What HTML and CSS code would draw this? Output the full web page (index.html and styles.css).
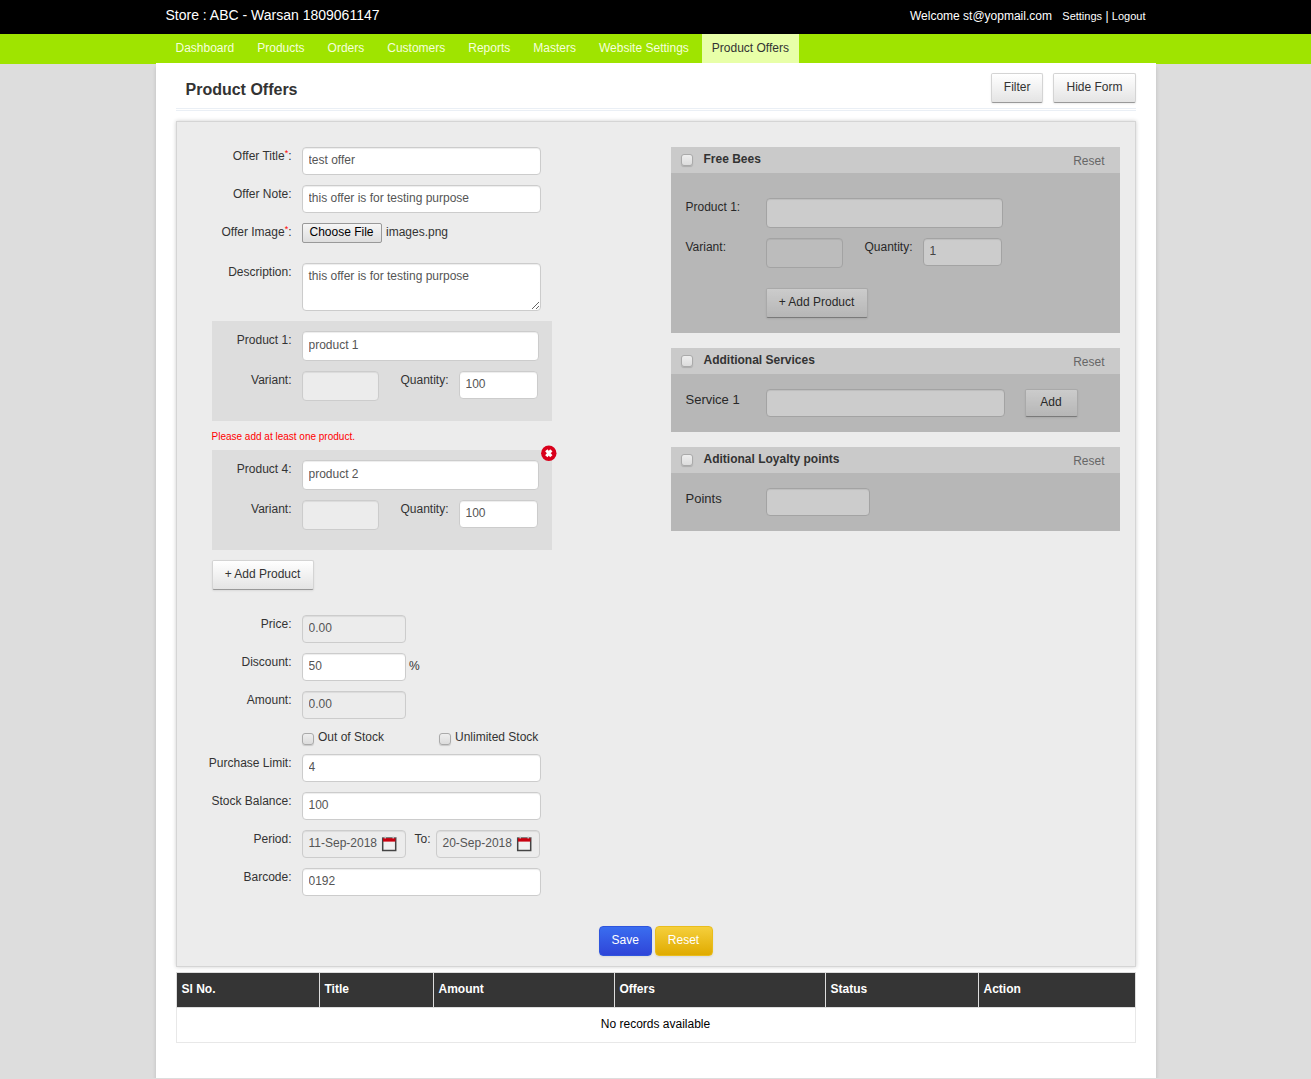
FILE: index.html
```html
<!DOCTYPE html>
<html lang="en">
<head>
  <meta charset="UTF-8" />
  <title>Product Offers</title>
  <link rel="stylesheet" href="styles.css">
</head>
<body>
  <div class="topbar">
    <div class="wrap topbar-inner">
      <div class="store-name">Store : ABC - Warsan 1809061147</div>
      <div class="user-links">
        <span class="welcome">Welcome st@yopmail.com</span>
        <a href="#">Settings</a> | <a href="#">Logout</a>
      </div>
    </div>
  </div>

  <div class="navbar">
    <ul class="wrap nav">
      <li><a href="#">Dashboard</a></li>
      <li><a href="#">Products</a></li>
      <li><a href="#">Orders</a></li>
      <li><a href="#">Customers</a></li>
      <li><a href="#">Reports</a></li>
      <li><a href="#">Masters</a></li>
      <li><a href="#">Website Settings</a></li>
      <li class="active"><a href="#">Product Offers</a></li>
    </ul>
  </div>

  <div class="wrap page">
    <div class="page-head">
      <h1>Product Offers</h1>
      <div class="head-buttons">
        <button type="button" class="btn">Filter</button>
        <button type="button" class="btn">Hide Form</button>
      </div>
    </div>

    <form class="panel">
      <div class="columns">
        <div class="col-left">
          <div class="row">
            <label for="title">Offer Title<sup>*</sup>:</label>
            <input type="text" id="title" class="wide" value="test offer">
          </div>
          <div class="row">
            <label for="note">Offer Note:</label>
            <input type="text" id="note" class="wide" value="this offer is for testing purpose">
          </div>
          <div class="row file-row">
            <label>Offer Image<sup>*</sup>:</label>
            <button type="button" class="file-btn">Choose File</button>
            <span class="file-name">images.png</span>
          </div>
          <div class="row">
            <label for="desc">Description:</label>
            <textarea id="desc" class="wide">this offer is for testing purpose</textarea>
          </div>

          <div class="product-box">
            <div class="row">
              <label for="p1">Product 1:</label>
              <input type="text" id="p1" class="product" value="product 1">
            </div>
            <div class="row">
              <label>Variant:</label>
              <div class="variant"></div>
              <label class="qty-label" for="q1">Quantity:</label>
              <input type="text" id="q1" class="qty" value="100">
            </div>
          </div>
          <p class="error">Please add at least one product.</p>
          <div class="product-box">
            <a href="#" class="remove">
              <svg width="16" height="16" viewBox="0 0 16 16">
                <circle cx="7.8" cy="8.3" r="7.7" fill="#d9001b"/>
                <path d="M5.3 5.3l5 6M10.3 5.3l-5 6" stroke="#fff" stroke-width="3"/>
              </svg>
            </a>
            <div class="row">
              <label for="p4">Product 4:</label>
              <input type="text" id="p4" class="product" value="product 2">
            </div>
            <div class="row">
              <label>Variant:</label>
              <div class="variant"></div>
              <label class="qty-label" for="q4">Quantity:</label>
              <input type="text" id="q4" class="qty" value="100">
            </div>
          </div>
          <button type="button" class="btn add-product">+ Add Product</button>

          <div class="row">
            <label for="price">Price:</label>
            <input type="text" id="price" class="small" value="0.00" readonly>
          </div>
          <div class="row">
            <label for="discount">Discount:</label>
            <input type="text" id="discount" class="small" value="50">
            <span class="percent">%</span>
          </div>
          <div class="row">
            <label for="amount">Amount:</label>
            <input type="text" id="amount" class="small" value="0.00" readonly>
          </div>
          <div class="row checks">
            <label class="check"><input type="checkbox">Out of Stock</label>
            <label class="check"><input type="checkbox">Unlimited Stock</label>
          </div>
          <div class="row">
            <label for="limit">Purchase Limit:</label>
            <input type="text" id="limit" class="wide" value="4">
          </div>
          <div class="row">
            <label for="stock">Stock Balance:</label>
            <input type="text" id="stock" class="wide" value="100">
          </div>
          <div class="row">
            <label>Period:</label>
            <div class="date">11-Sep-2018
              <svg width="16" height="16" viewBox="0 0 16 16">
                <rect x="1.7" y="2.2" width="13" height="12.3" fill="#f0f0f0" stroke="#444" stroke-width="1.5"/>
                <rect x="2" y="2" width="12.4" height="3.6" fill="#c8000f"/>
                <path d="M1 1.7h14.4" stroke="#777" stroke-width=".8"/>
                <path d="M4.2 .6v2M12.2 .6v2" stroke="#ccc" stroke-width="1.4"/>
              </svg>
            </div>
            <span class="to">To:</span>
            <div class="date">20-Sep-2018
              <svg width="16" height="16" viewBox="0 0 16 16">
                <rect x="1.7" y="2.2" width="13" height="12.3" fill="#f0f0f0" stroke="#444" stroke-width="1.5"/>
                <rect x="2" y="2" width="12.4" height="3.6" fill="#c8000f"/>
                <path d="M1 1.7h14.4" stroke="#777" stroke-width=".8"/>
                <path d="M4.2 .6v2M12.2 .6v2" stroke="#ccc" stroke-width="1.4"/>
              </svg>
            </div>
          </div>
          <div class="row">
            <label for="barcode">Barcode:</label>
            <input type="text" id="barcode" class="wide" value="0192">
          </div>
        </div>

        <div class="col-right">
          <div class="extra">
            <div class="extra-head">
              <input type="checkbox"><h2>Free Bees</h2><a href="#">Reset</a>
            </div>
            <div class="extra-body freebees">
              <div class="row">
                <label for="fp">Product 1:</label>
                <input type="text" id="fp" class="product">
              </div>
              <div class="row">
                <label>Variant:</label>
                <div class="variant"></div>
                <label class="qty-label" for="fq">Quantity:</label>
                <input type="text" id="fq" class="qty" value="1">
              </div>
              <button type="button" class="btn">+ Add Product</button>
            </div>
          </div>

          <div class="extra">
            <div class="extra-head">
              <input type="checkbox"><h2>Additional Services</h2><a href="#">Reset</a>
            </div>
            <div class="extra-body large-labels">
              <div class="row">
                <label for="service">Service 1</label>
                <input type="text" id="service" class="wide">
                <button type="button" class="btn btn-add">Add</button>
              </div>
            </div>
          </div>

          <div class="extra">
            <div class="extra-head">
              <input type="checkbox"><h2>Aditional Loyalty points</h2><a href="#">Reset</a>
            </div>
            <div class="extra-body large-labels">
              <div class="row">
                <label for="points">Points</label>
                <input type="text" id="points" class="small">
              </div>
            </div>
          </div>
        </div>
      </div>

      <div class="form-actions">
        <button type="button" class="btn btn-save">Save</button>
        <button type="button" class="btn btn-reset">Reset</button>
      </div>
    </form>

    <table>
      <colgroup>
        <col style="width:143px"><col style="width:114px"><col style="width:181px"><col style="width:211px"><col style="width:153px"><col>
      </colgroup>
      <thead>
        <tr><th>Sl No.</th><th>Title</th><th>Amount</th><th>Offers</th><th>Status</th><th>Action</th></tr>
      </thead>
      <tbody>
        <tr><td colspan="6">No records available</td></tr>
      </tbody>
    </table>
  </div>
</body>
</html>
```
FILE: styles.css
```css
* {
  box-sizing: border-box;
}
body {
  margin: 0;
  background-color: #ddd;
  font-family: "Liberation Sans", Arial, sans-serif;
  font-size: 12px;
  line-height: 18px;
  color: #333;
}
a {
  color: inherit;
  text-decoration: none;
}
.wrap {
  width: 1000px;
  margin: 0 auto;
}

/* header */
.topbar {
  height: 34px;
  background-color: #000;
  color: #fff;
}
.topbar-inner {
  display: flex;
  justify-content: space-between;
  padding: 6px 10px 0;
}
.store-name {
  font-size: 14px;
}
.user-links {
  padding-top: 1px;
}
.user-links a {
  font-size: 11px;
}
.welcome {
  margin-right: 7px;
}
.navbar {
  height: 30px;
  background-color: #9fe400;
}
.nav {
  display: flex;
  gap: 3px;
  padding: 0 10px;
  list-style: none;
}
.nav a {
  display: block;
  height: 29px;
  padding: 5px 10px;
  color: #f5ffdc;
}
.nav .active a {
  background-color: #e8ffa8;
  color: #333;
}

.page {
  height: 1015px;
  margin-top: -1px;
  padding: 10px 20px 0;
  background-color: #fff;
  box-shadow: 0 4px 4px rgba(0, 0, 0, 0.15);
}
.page-head {
  display: flex;
  justify-content: space-between;
  height: 38px;
  padding-left: 10px;
  border-bottom: 3px double #eaeff5;
}
h1 {
  margin: 7px 0 0;
  font-size: 16px;
  line-height: 20px;
}
.head-buttons {
  display: flex;
  gap: 10px;
}

/* buttons */
.btn {
  height: 30px;
  padding: 0 12px 2px;
  border: 1px solid #d4d4d4;
  border-bottom-color: #999;
  border-radius: 2px;
  background: linear-gradient(#fff, #e4e4e4);
  box-shadow: 0 1px 2px rgba(0, 0, 0, 0.08);
  font: 12px/18px "Liberation Sans", Arial, sans-serif;
  color: #333;
}
.btn-save,
.btn-reset {
  width: 53px;
  border: 1px solid #2f55dd;
  border-radius: 4px;
  background: linear-gradient(#3a6df0, #2f45d8);
  color: #fff;
}
.btn-reset {
  width: 58px;
  border-color: #e9bd1c;
  background: linear-gradient(#f5cf3c, #e0ab00);
}

/* form */
.panel {
  height: 846px;
  margin-top: 10px;
  padding-top: 25px;
  border: 1px solid #d5d5d5;
  background-color: #ececec;
  box-shadow: 0 0 4px rgba(0, 0, 0, 0.2);
}
.columns {
  display: flex;
  justify-content: space-between;
  height: 779px;
  padding: 0 15px 0 5px;
}
.col-left {
  width: 370px;
}
.row {
  display: flex;
  align-items: flex-start;
  margin-bottom: 10px;
}
.row label {
  width: 110px;
  margin-right: 10px;
  text-align: right;
  white-space: nowrap;
}
sup {
  position: relative;
  top: 1px;
  font-size: 9px;
  line-height: 0;
  color: #f00;
}
input[type="text"],
textarea,
.variant,
.date {
  display: block;
  height: 28px;
  margin: 0;
  padding: 3px 6px 5px;
  border: 1px solid #ccc;
  border-radius: 4px;
  background-color: #fff;
  box-shadow: inset 0 1px 1px rgba(0, 0, 0, 0.075);
  font: 12px/18px "Liberation Sans", Arial, sans-serif;
  color: #555;
}
input[readonly],
.variant,
.date {
  background-color: #ececec;
}
input.wide {
  width: 239px;
}
textarea {
  width: 239px;
  height: 48px;
}
input.product {
  width: 237px;
  height: 30px;
}
.variant {
  width: 77px;
  height: 30px;
}
input.qty {
  width: 79px;
}
input.small,
.date {
  width: 104px;
}
.file-row {
  margin-bottom: 20px;
}
.file-btn {
  width: 80px;
  height: 20px;
  padding: 0 0 2px;
  border: 1px solid #999;
  border-radius: 2px;
  background: linear-gradient(#f6f6f6, #dedede);
  font: 12px "Liberation Sans", Arial, sans-serif;
  color: #000;
}
.file-name {
  margin-left: 4.5px;
}
.product-box {
  position: relative;
  width: 340px;
  height: 100px;
  margin-left: 30px;
  padding-top: 10px;
  background-color: #ddd;
}
.product-box .row label {
  width: 80px;
}
.row .qty-label,
.product-box .row .qty-label {
  width: 70px;
}
.remove {
  position: absolute;
  top: -5px;
  right: -5px;
  height: 16px;
}
.remove svg {
  display: block;
}
.error {
  height: 29px;
  margin: 0 0 0 30px;
  padding-top: 7px;
  font-size: 10px;
  color: #f00;
}
.add-product {
  display: block;
  width: 102px;
  margin: 10px 0 25px 30px;
}
.percent {
  padding: 4px 0 0 3.5px;
}
.date {
  display: flex;
  gap: 4px;
  padding-right: 0;
}
.date svg {
  margin-top: 2px;
}
.to {
  margin: 0 5px 0 9px;
}

/* checkboxes */
input[type="checkbox"] {
  appearance: none;
  width: 12px;
  height: 12px;
  margin: 0;
  border: 1px solid #aaa;
  border-radius: 3px;
  background: linear-gradient(#eee, #dcdcdc);
  box-shadow: 0 1px 1px rgba(0, 0, 0, 0.15);
}
.checks {
  height: 25px;
  margin: 0 0 0 120px;
}
.row .check {
  display: flex;
  flex: none;
  gap: 4.5px;
  width: 137px;
  margin: -1px 0 0;
  text-align: left;
}
.row .check input {
  margin-top: 5px;
}

/* right side boxes */
.col-right {
  width: 449px;
}
.extra {
  margin-bottom: 15px;
}
.extra-head {
  display: flex;
  height: 26px;
  padding: 0 15px 0 10px;
  background-color: #cacaca;
}
.extra-head input[type="checkbox"] {
  margin-top: 7px;
}
.extra-head h2 {
  flex: 1;
  margin: 3px 0 0 11px;
  font-size: 12px;
  line-height: 18px;
}
.extra-head a {
  margin-top: 5px;
  color: #666;
}
.extra-body {
  position: relative;
  padding: 15px 15px 5px;
  background-color: #e5e5e5;
}
/* shade over the disabled sections */
.extra-body::after {
  content: "";
  position: absolute;
  inset: 0;
  background-color: rgba(0, 0, 0, 0.2);
}
.freebees {
  height: 160px;
  padding-top: 25px;
}
.extra-body .row label {
  width: 70px;
  text-align: left;
}
.extra-body .row .qty-label {
  text-align: right;
}
.freebees .btn {
  width: 102px;
  margin: 10px 0 0 80px;
}
.large-labels label {
  padding-top: 2px;
  font-size: 13px;
}
.btn-add {
  width: 53px;
  height: 28px;
  margin-left: 20px;
}

.form-actions {
  display: flex;
  justify-content: center;
  gap: 3px;
}

/* list */
table {
  width: 960px;
  margin-top: 5px;
  border-collapse: collapse;
  table-layout: fixed;
  color: #000;
}
th {
  height: 35px;
  padding: 0 5px 2px;
  border: 1px solid #ddd;
  background-color: #353535;
  color: #fff;
  text-align: left;
}
td {
  height: 35px;
  padding: 0 0 2px;
  border: 1px solid #e8e8e8;
  text-align: center;
}
```
